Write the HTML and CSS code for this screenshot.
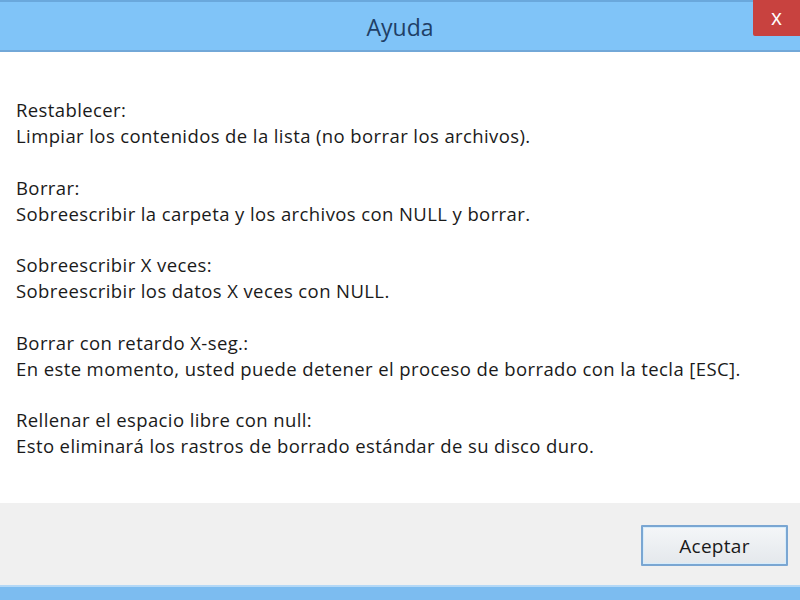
FILE: index.html
```html
<!DOCTYPE html>
<html lang="es">
<head>
  <meta charset="UTF-8">
  <meta name="viewport" content="width=device-width, initial-scale=1.0">
  <title>Ayuda</title>
  <link rel="stylesheet" href="styles.css">
</head>
<body>
  <div class="window">
    <!-- Title bar -->
    <div class="titlebar">
      <span class="title">Ayuda</span>
      <div class="close">x</div>
    </div>

    <!-- Help text -->
    <div class="content">
      <p>Restablecer:<br>Limpiar los contenidos de la lista (no borrar los archivos).</p>
      <p>Borrar:<br>Sobreescribir la carpeta y los archivos con NULL y borrar.</p>
      <p>Sobreescribir X veces:<br>Sobreescribir los datos X veces con NULL.</p>
      <p>Borrar con retardo X-seg.:<br>En este momento, usted puede detener el proceso de borrado con la tecla [ESC].</p>
      <p>Rellenar el espacio libre con null:<br>Esto eliminará los rastros de borrado estándar de su disco duro.</p>
    </div>

    <div class="footer">
      <button class="ok">Aceptar</button>
    </div>

    <div class="frame-bottom"></div>
  </div>
</body>
</html>
```

FILE: styles.css
```css
* {
  box-sizing: border-box;
}

body {
  margin: 0;
  font-family: "Open Sans", "Noto Sans", sans-serif;
  color: #1a1a1a;
  background: #7cbcf0;
}

.window {
  display: flex;
  flex-direction: column;
  width: 800px;
  height: 600px;
}

.titlebar {
  position: relative;
  display: flex;
  align-items: center;
  justify-content: center;
  height: 52px;
  background: #80c4f8;
  border-top: 2px solid #6aa8dc;
  border-bottom: 2px solid #72a8d8;
}

.title {
  font-size: 23px;
  color: #1f3f66;
  margin-top: 2px;
}

.close {
  position: absolute;
  top: -2px;
  right: 0;
  width: 47px;
  height: 36px;
  display: flex;
  align-items: center;
  justify-content: center;
  padding-bottom: 3px;
  background: #c8423f;
  color: #fff;
  font-size: 21px;
  border-bottom-left-radius: 2px;
}

.content {
  flex: 1;
  background: #fff;
  padding: 45px 16px 0;
  font-size: 18.5px;
  line-height: 26px;
  letter-spacing: 0.4px;
}

.content p {
  margin: 0 0 25.5px;
}

.footer {
  display: flex;
  justify-content: flex-end;
  align-items: flex-start;
  height: 82px;
  padding: 22px 12px 0;
  background: #f0f0f0;
}

.ok {
  width: 147px;
  height: 41px;
  font-family: inherit;
  font-size: 19px;
  letter-spacing: 0.3px;
  color: #1a1a1a;
  background: linear-gradient(#f4f6f8, #e4e8ec);
  border: 2px solid #7aa6d2;
  border-radius: 1px;
  box-shadow: inset 0 0 0 1px #d6ecfb;
}

.frame-bottom {
  height: 15px;
  background: #7cbcf0;
  border-top: 2px solid #b4d8f6;
}
```
